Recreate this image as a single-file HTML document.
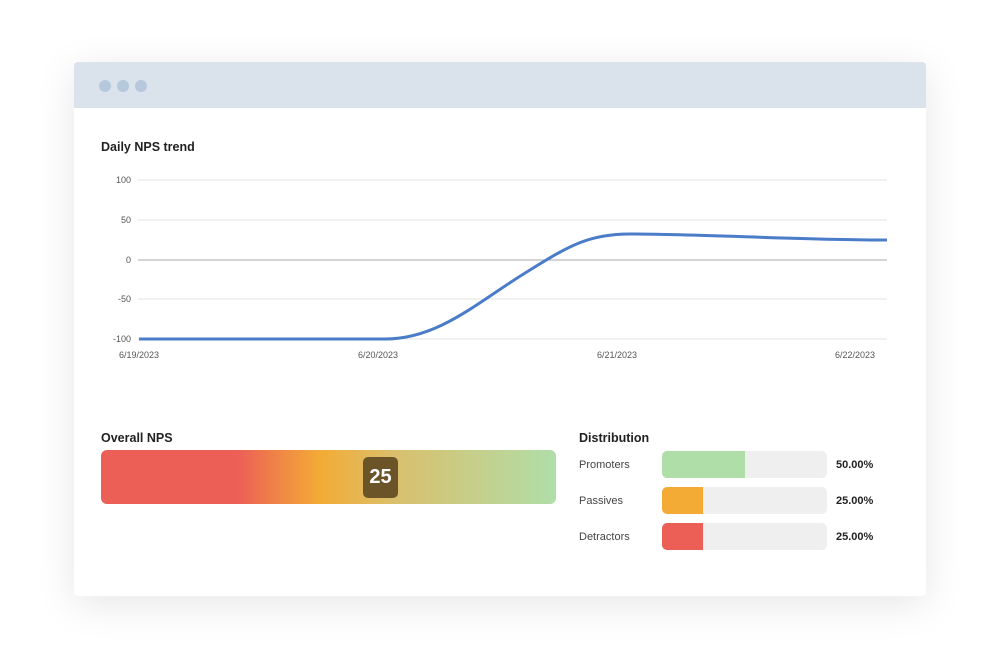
<!DOCTYPE html><html><head><style>
body{margin:0;width:1000px;height:662px;background:#fff;font-family:"Liberation Sans",sans-serif;position:relative;overflow:hidden}
.card{position:absolute;left:74px;top:62px;width:852px;height:534px;background:#fff;border-radius:4px;box-shadow:0 8px 40px rgba(0,0,0,.10);overflow:hidden}
.hdr{height:46px;background:#dae2ec}
.dot{position:absolute;top:18px;width:12px;height:12px;border-radius:50%;background:#b6c8dc}
.t{position:absolute;font-size:12.5px;font-weight:bold;color:#222}
.l{position:absolute;font-size:11px;color:#444}
.bar{position:absolute;left:662px;width:165px;height:27px;border-radius:5px;background:#efefef;overflow:hidden}
.bar div{height:100%}
.p{position:absolute;left:836px;font-size:11px;font-weight:bold;color:#222}
</style></head><body>
<div class="card"><div class="hdr"></div>
<div class="dot" style="left:25px"></div><div class="dot" style="left:43px"></div><div class="dot" style="left:61px"></div></div>
<div class="t" style="left:101px;top:140px">Daily NPS trend</div>
<svg style="position:absolute;left:0;top:0" width="1000" height="662" font-family="Liberation Sans" font-size="9" fill="#555">
<g stroke="#e3e3e3"><line x1="138" x2="887" y1="180" y2="180"/><line x1="138" x2="887" y1="220" y2="220"/><line x1="138" x2="887" y1="299" y2="299"/><line x1="138" x2="887" y1="339" y2="339"/></g>
<line x1="138" x2="887" y1="260" y2="260" stroke="#aaa"/>
<g text-anchor="end"><text x="131" y="183">100</text><text x="131" y="223">50</text><text x="131" y="263">0</text><text x="131" y="302">-50</text><text x="131" y="342">-100</text></g>
<g text-anchor="middle"><text x="139" y="358">6/19/2023</text><text x="378" y="358">6/20/2023</text><text x="617" y="358">6/21/2023</text><text x="855" y="358">6/22/2023</text></g>
<path d="M139 339 L385 339 C440 339 480 300 530 270 C570 245 590 234 630 234 C700 234 800 240 887 240" fill="none" stroke="#4a7cc8" stroke-width="3"/>
</svg>
<div class="t" style="left:101px;top:431px">Overall NPS</div>
<div style="position:absolute;left:101px;top:450px;width:455px;height:54px;border-radius:6px;background:linear-gradient(90deg,#ec5f57 0%,#ec5f57 30%,#f3ab35 48%,#d9c06e 65%,#b0dea8 100%)"></div>
<div style="position:absolute;left:363px;top:457px;width:35px;height:41px;border-radius:5px;background:#6b5427;color:#fff;font-weight:bold;font-size:20px;text-align:center;line-height:41px">25</div>
<div class="t" style="left:579px;top:431px">Distribution</div>
<div class="l" style="left:579px;top:459px">Promoters</div><div class="bar" style="top:451px"><div style="width:83px;background:#b0dea8"></div></div><div class="p" style="top:459px">50.00%</div>
<div class="l" style="left:579px;top:495px">Passives</div><div class="bar" style="top:487px"><div style="width:41px;background:#f3ab35"></div></div><div class="p" style="top:495px">25.00%</div>
<div class="l" style="left:579px;top:531px">Detractors</div><div class="bar" style="top:523px"><div style="width:41px;background:#ec5f57"></div></div><div class="p" style="top:531px">25.00%</div>
</body></html>
